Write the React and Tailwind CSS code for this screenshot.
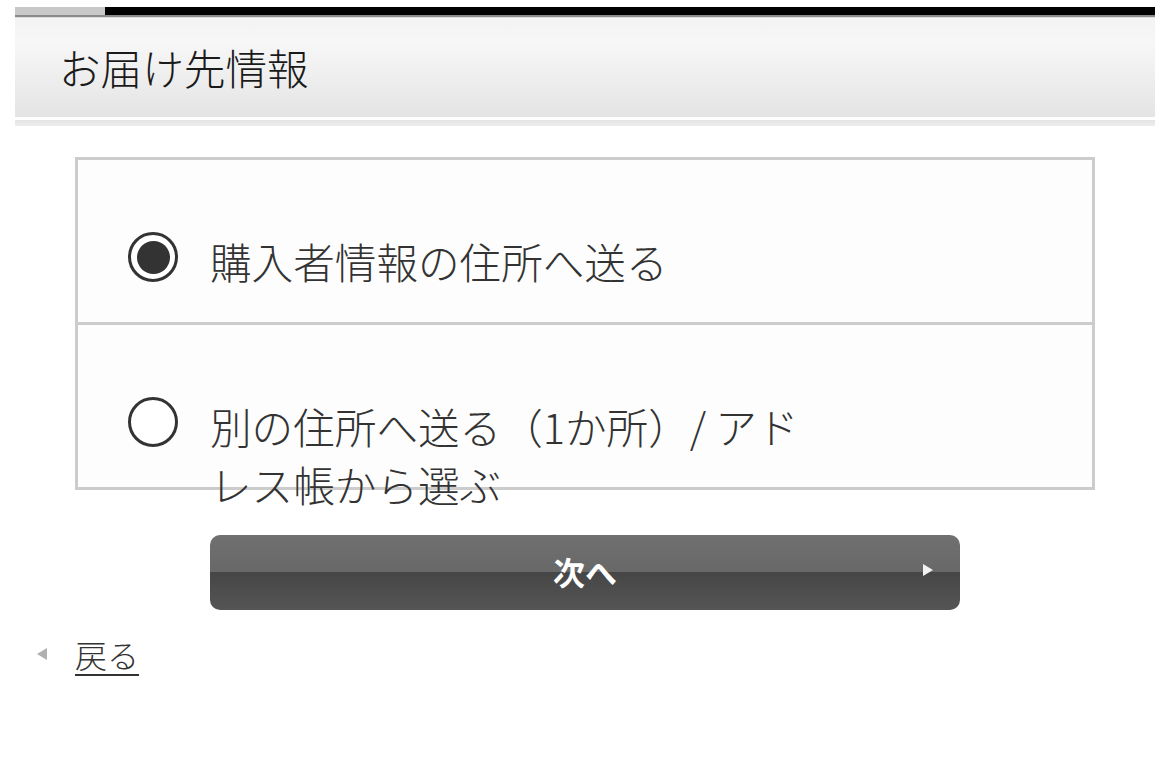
import React from 'react';

const font = { fontFamily: '"Noto Sans CJK JP", "Noto Sans", sans-serif' };

const Radio = ({ checked }) => (
  <span className="flex h-[50px] w-[50px] shrink-0 items-center justify-center rounded-full border-[3px] border-[#333333] bg-white">
    {checked && <span className="h-[33px] w-[33px] rounded-full bg-[#333333]" />}
  </span>
);

const Option = ({ checked, label, divider }) => (
  <label
    className={`flex items-start gap-[32px] pl-[50px] pt-[72px] ${
      divider ? 'h-[165px] border-b-[3px] border-[#cccccc]' : 'h-[162px]'
    }`}
  >
    <Radio checked={checked} />
    <span className="w-[620px] text-[41.6px] font-light leading-[58px] text-[#333333]">{label}</span>
  </label>
);

export default function App() {
  return (
    <div className="min-h-[757px] bg-white" style={font}>
      <div className="px-[15px] pt-[7px]">
        {/* progress bar */}
        <div className="flex h-[10px] border-b-2 border-[#8a8a8a]">
          <div className="w-[90px] bg-[#c8c8c8]" />
          <div className="flex-1 bg-black" />
        </div>

        {/* title */}
        <div className="flex h-[100px] items-center border-t border-[#dddddd] bg-[linear-gradient(to_bottom,#f3f3f3,#f7f7f7_25%,#e4e4e4)] pl-[44px]">
          <h1 className="text-[41.6px] font-light leading-none text-[#1a1a1a]">お届け先情報</h1>
        </div>
        <div className="h-[3px] bg-white" />
        <div className="h-[6px] bg-[linear-gradient(to_bottom,#e4e4e4,#eeeeee)]" />
      </div>

      {/* options */}
      <div className="ml-[75px] mt-[31px] w-[1020px] border-[3px] border-[#cccccc] bg-[#fdfdfd]">
        <Option checked divider label="購入者情報の住所へ送る" />
        <Option label="別の住所へ送る（1か所）/ アドレス帳から選ぶ" />
      </div>

      {/* next button */}
      <div className="mt-[45px] flex justify-center">
        <button className="relative flex h-[75px] w-[750px] items-center justify-center rounded-[10px] bg-[linear-gradient(to_bottom,#707070_0%,#686868_49%,#464646_50%,#555555_100%)] pb-[4px] text-[32px] font-bold text-white">
          次へ
          <svg className="absolute right-[26px] top-[28px]" width="12" height="14" viewBox="0 0 12 14">
            <path d="M1 1 L11 7 L1 13 Z" fill="#f2f2f2" />
          </svg>
        </button>
      </div>

      {/* back link */}
      <div className="mt-[22px] flex items-center pl-[36px]">
        <svg width="12" height="14" viewBox="0 0 12 14">
          <path d="M11 1 L1 7 L11 13 Z" fill="#b0b0b0" />
        </svg>
        <a href="#" className="ml-[27px] text-[32px] font-light leading-[44px] text-[#333333] underline decoration-2 underline-offset-[6px]">
          戻る
        </a>
      </div>
    </div>
  );
}
